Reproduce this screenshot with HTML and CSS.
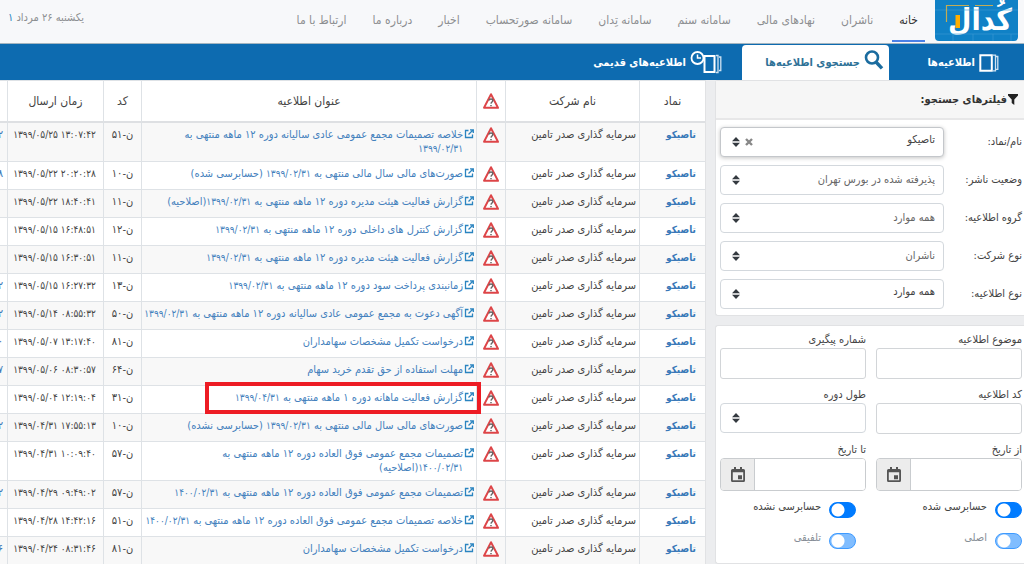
FILE: index.html
```html
<!DOCTYPE html>
<html lang="fa" dir="rtl">
<head>
<meta charset="utf-8">
<meta name="viewport" content="width=device-width, initial-scale=1">
<title>کدال - جستجوی اطلاعیه‌ها</title>
<link rel="stylesheet" href="styles.css">
</head>
<body>
<svg class="defs" aria-hidden="true">
  <symbol id="warn" viewBox="0 0 16 16"><path d="M8 1.200 15 14.800H1Z" fill="#fff" stroke="#dd4548" stroke-width="1.900" stroke-linejoin="round"/><path d="M6.200 7.600c0-2.200 3.600-2.200 3.600 0 0 1.400-1.600 1.400-1.800 3M8 12v1.300" fill="none" stroke="#666" stroke-width="1.500"/></symbol>
  <symbol id="ext" viewBox="0 0 10 10"><path d="M4.500 1.500H1.500v7h7V5.500M6 .8h3.300V4M9 1 4.500 5.500" fill="none" stroke="#2a84c0" stroke-width="1.300"/></symbol>
  <symbol id="book" viewBox="0 0 20 18"><path d="M1.300 1.300h11.500v15.400H1.300Z" fill="none" stroke="#fff" stroke-width="2"/><path d="M14 1.200h2.500v15.600H14M17 2.500h1.800v12.800H17" fill="none" stroke="#cfe2f1" stroke-width="1.300"/></symbol>
  <symbol id="sort" viewBox="0 0 8 10"><path d="M4 0 8 4.300H0ZM4 10 0 5.700h8Z" fill="#343a40"/></symbol>
  <symbol id="cal" viewBox="0 0 14 15"><path d="M3 0h2v2h4V0h2v2h1.500Q14 2 14 3.500v10Q14 15 12.500 15h-11Q0 15 0 13.500v-10Q0 2 1.500 2H3ZM1.800 5.300v7.900h10.400V5.300ZM7 8.200h4v4H7Z" fill="#555" fill-rule="evenodd"/></symbol>
</svg>
<header class="top">
  <a class="logo" href="#" aria-label="کدال">
    <span class="logo-text">کُدال</span>
    <svg class="logo-frame" viewBox="0 0 83 43" aria-hidden="true">
      <path d="M0 10H83M0 34H83M18 34V43M38 34V43M58 34V43M76 34V43" stroke="#3c9ad3" stroke-width=".6"/>
      <path d="M11.500 22V5.500H34M40 5.500H58" fill="none" stroke="#c2ac55" stroke-width="1.200"/>
      <path d="M20.500 15h4.500v13h-4.500Z" fill="#ffae00"/>
    </svg>
  </a>
  <nav class="nav">
    <a class="on" href="#">خانه</a><a href="#">ناشران</a><a href="#">نهادهای مالی</a><a href="#">سامانه سنم</a><a href="#">سامانه تِدان</a><a href="#">سامانه صورتحساب</a><a href="#">اخبار</a><a href="#">درباره ما</a><a href="#">ارتباط با ما</a>
  </nav>
  <div class="today">یکشنبه ۲۶ مرداد <span>۱</span></div>
</header>
<nav class="tabs">
  <a class="tab first" href="#"><svg class="book"><use href="#book"/></svg>اطلاعیه‌ها</a>
  <a class="tab active" href="#"><svg class="mag" viewBox="0 0 20 20"><circle cx="8" cy="7.500" r="6" fill="none" stroke="#1b6c9f" stroke-width="2.600"/><path d="m12 12 6 6.300" stroke="#1b6c9f" stroke-width="3.400"/></svg>جستجوی اطلاعیه‌ها</a>
  <a class="tab old" href="#"><svg class="clockbook" viewBox="0 0 32 24"><circle cx="7.500" cy="8" r="6" fill="none" stroke="#fff" stroke-width="1.800"/><path d="M7.500 4.500V8h3.500" fill="none" stroke="#fff" stroke-width="1.500"/><path d="M14.500 6h10v16h-10Z" fill="#0d6bb0" stroke="#fff" stroke-width="2"/><path d="M26 5.500h2v17h-2M29 7h1.800v13.500H29" fill="none" stroke="#cfe2f1" stroke-width="1.300"/></svg>اطلاعیه‌های قدیمی</a>
</nav>
<div class="page">
  <aside class="side">
    <section class="card">
      <h2 class="card-head"><svg viewBox="0 0 10 11"><path d="M0 0h10v1.500L6.300 5.500V11L3.700 9V5.500L0 1.500Z" fill="#222"/></svg>فیلترهای جستجو:</h2>
      <div class="filters">
        <label for="f1">نام/نماد:</label><div class="pick focus raised"><select id="f1"><option>تاصیکو</option></select><button class="clear" type="button" aria-label="حذف"><svg viewBox="0 0 8 8"><path d="m1 1 6 6M7 1 1 7" stroke="#888" stroke-width="2.400"/></svg></button><svg class="sort"><use href="#sort"/></svg></div>
        <label for="f2">وضعیت ناشر:</label><div class="pick"><select id="f2"><option>پذیرفته شده در بورس تهران</option></select><svg class="sort"><use href="#sort"/></svg></div>
        <label for="f3">گروه اطلاعیه:</label><div class="pick"><select id="f3"><option>همه موارد</option></select><svg class="sort"><use href="#sort"/></svg></div>
        <label for="f4">نوع شرکت:</label><div class="pick"><select id="f4"><option>ناشران</option></select><svg class="sort"><use href="#sort"/></svg></div>
        <label for="f5">نوع اطلاعیه:</label><div class="pick raised"><select id="f5"><option>همه موارد</option></select><svg class="sort"><use href="#sort"/></svg></div>
      </div>
    </section>
    <section class="card more">
      <div class="grid">
        <div class="field"><label for="g1">موضوع اطلاعیه</label><input id="g1" type="text"></div>
        <div class="field"><label for="g2">شماره پیگیری</label><input id="g2" type="text"></div>
        <div class="field"><label for="g3">کد اطلاعیه</label><input id="g3" type="text"></div>
        <div class="field"><label for="g4">طول دوره</label><div class="pick"><select id="g4"><option></option></select><svg class="sort"><use href="#sort"/></svg></div></div>
        <div class="field"><label for="g5">از تاریخ</label><div class="date"><input id="g5" type="text"><button type="button" aria-label="تقویم"><svg><use href="#cal"/></svg></button></div></div>
        <div class="field"><label for="g6">تا تاریخ</label><div class="date"><input id="g6" type="text"><button type="button" aria-label="تقویم"><svg><use href="#cal"/></svg></button></div></div>
      </div>
      <div class="switches">
        <label><input type="checkbox" checked>حسابرسی شده</label><label><input type="checkbox" checked>حسابرسی نشده</label>
        <label><input type="checkbox" checked disabled>اصلی</label><label><input type="checkbox" checked disabled>تلفیقی</label>
      </div>
    </section>
  </aside>
  <main class="main">
    <table class="list">
      <colgroup><col class="c-sym"><col class="c-co"><col class="c-warn"><col><col class="c-code"><col class="c-time"><col class="c-pub"></colgroup>
      <thead><tr><th>نماد</th><th>نام شرکت</th><th><svg class="warn"><use href="#warn"/></svg></th><th>عنوان اطلاعیه</th><th>کد</th><th>زمان ارسال</th><th></th></tr></thead>
      <tbody>
      <tr><td class="sym"><a href="#">تاصیکو</a></td><td>سرمایه گذاری صدر تامین</td><td class="w"><svg class="warn"><use href="#warn"/></svg></td><td class="title"><a href="#"><svg><use href="#ext"/></svg><span>خلاصه تصمیمات مجمع عمومی عادی سالیانه دوره ۱۲ ماهه منتهی به<br><small>۱۳۹۹/۰۲/۳۱</small></span></a></td><td class="code">ن-۵۱</td><td class="time">۱۳۹۹/۰۵/۲۵ ۱۳:۰۷:۴۲</td><td class="pub">۲</td></tr>
      <tr><td class="sym"><a href="#">تاصیکو</a></td><td>سرمایه گذاری صدر تامین</td><td class="w"><svg class="warn"><use href="#warn"/></svg></td><td class="title"><a href="#"><svg><use href="#ext"/></svg><span>صورت‌های مالی سال مالی منتهی به <small>۱۳۹۹/۰۲/۳۱</small> (حسابرسی شده)</span></a></td><td class="code">ن-۱۰</td><td class="time">۱۳۹۹/۰۵/۲۲ ۲۰:۲۰:۲۸</td><td class="pub">۸</td></tr>
      <tr><td class="sym"><a href="#">تاصیکو</a></td><td>سرمایه گذاری صدر تامین</td><td class="w"><svg class="warn"><use href="#warn"/></svg></td><td class="title"><a href="#"><svg><use href="#ext"/></svg><span>گزارش فعالیت هیئت مدیره دوره ۱۲ ماهه منتهی به <small>۱۳۹۹/۰۲/۳۱</small>(اصلاحیه)</span></a></td><td class="code">ن-۱۱</td><td class="time">۱۳۹۹/۰۵/۲۲ ۱۸:۴۰:۴۱</td><td></td></tr>
      <tr><td class="sym"><a href="#">تاصیکو</a></td><td>سرمایه گذاری صدر تامین</td><td class="w"><svg class="warn"><use href="#warn"/></svg></td><td class="title"><a href="#"><svg><use href="#ext"/></svg><span>گزارش کنترل های داخلی دوره ۱۲ ماهه منتهی به <small>۱۳۹۹/۰۲/۳۱</small></span></a></td><td class="code">ن-۱۲</td><td class="time">۱۳۹۹/۰۵/۱۵ ۱۶:۴۸:۵۱</td><td></td></tr>
      <tr><td class="sym"><a href="#">تاصیکو</a></td><td>سرمایه گذاری صدر تامین</td><td class="w"><svg class="warn"><use href="#warn"/></svg></td><td class="title"><a href="#"><svg><use href="#ext"/></svg><span>گزارش فعالیت هیئت مدیره دوره ۱۲ ماهه منتهی به <small>۱۳۹۹/۰۲/۳۱</small></span></a></td><td class="code">ن-۱۱</td><td class="time">۱۳۹۹/۰۵/۱۵ ۱۶:۳۰:۵۱</td><td></td></tr>
      <tr><td class="sym"><a href="#">تاصیکو</a></td><td>سرمایه گذاری صدر تامین</td><td class="w"><svg class="warn"><use href="#warn"/></svg></td><td class="title"><a href="#"><svg><use href="#ext"/></svg><span>زمانبندی پرداخت سود دوره ۱۲ ماهه منتهی به <small>۱۳۹۹/۰۲/۳۱</small></span></a></td><td class="code">ن-۱۳</td><td class="time">۱۳۹۹/۰۵/۱۵ ۱۶:۲۷:۳۲</td><td class="pub">۲</td></tr>
      <tr><td class="sym"><a href="#">تاصیکو</a></td><td>سرمایه گذاری صدر تامین</td><td class="w"><svg class="warn"><use href="#warn"/></svg></td><td class="title"><a href="#"><svg><use href="#ext"/></svg><span>آگهی دعوت به مجمع عمومی عادی سالیانه دوره ۱۲ ماهه منتهی به <small>۱۳۹۹/۰۲/۳۱</small></span></a></td><td class="code">ن-۵۰</td><td class="time">۱۳۹۹/۰۵/۱۴ ۰۸:۵۵:۳۲</td><td class="pub">۲</td></tr>
      <tr><td class="sym"><a href="#">تاصیکو</a></td><td>سرمایه گذاری صدر تامین</td><td class="w"><svg class="warn"><use href="#warn"/></svg></td><td class="title"><a href="#"><svg><use href="#ext"/></svg><span>درخواست تکمیل مشخصات سهامداران</span></a></td><td class="code">ن-۸۱</td><td class="time">۱۳۹۹/۰۵/۰۷ ۱۳:۱۷:۴۰</td><td class="pub">۰</td></tr>
      <tr><td class="sym"><a href="#">تاصیکو</a></td><td>سرمایه گذاری صدر تامین</td><td class="w"><svg class="warn"><use href="#warn"/></svg></td><td class="title"><a href="#"><svg><use href="#ext"/></svg><span>مهلت استفاده از حق تقدم خرید سهام</span></a></td><td class="code">ن-۶۴</td><td class="time">۱۳۹۹/۰۵/۰۶ ۰۸:۳۰:۵۷</td><td class="pub">۷</td></tr>
      <tr><td class="sym"><a href="#">تاصیکو</a></td><td>سرمایه گذاری صدر تامین</td><td class="w"><svg class="warn"><use href="#warn"/></svg></td><td class="title marked"><a href="#"><svg><use href="#ext"/></svg><span>گزارش فعالیت ماهانه دوره ۱ ماهه منتهی به <small>۱۳۹۹/۰۴/۳۱</small></span></a></td><td class="code">ن-۳۱</td><td class="time">۱۳۹۹/۰۵/۰۴ ۱۲:۱۹:۰۴</td><td></td></tr>
      <tr><td class="sym"><a href="#">تاصیکو</a></td><td>سرمایه گذاری صدر تامین</td><td class="w"><svg class="warn"><use href="#warn"/></svg></td><td class="title"><a href="#"><svg><use href="#ext"/></svg><span>صورت‌های مالی سال مالی منتهی به <small>۱۳۹۹/۰۲/۳۱</small> (حسابرسی نشده)</span></a></td><td class="code">ن-۱۰</td><td class="time">۱۳۹۹/۰۴/۳۱ ۱۷:۵۵:۱۳</td><td class="pub">۲</td></tr>
      <tr><td class="sym"><a href="#">تاصیکو</a></td><td>سرمایه گذاری صدر تامین</td><td class="w"><svg class="warn"><use href="#warn"/></svg></td><td class="title"><a href="#"><svg><use href="#ext"/></svg><span>تصمیمات مجمع عمومی فوق العاده دوره ۱۲ ماهه منتهی به<br><small>۱۴۰۰/۰۲/۳۱</small>(اصلاحیه)</span></a></td><td class="code">ن-۵۷</td><td class="time">۱۳۹۹/۰۴/۳۱ ۱۰:۰۹:۴۰</td><td></td></tr>
      <tr><td class="sym"><a href="#">تاصیکو</a></td><td>سرمایه گذاری صدر تامین</td><td class="w"><svg class="warn"><use href="#warn"/></svg></td><td class="title"><a href="#"><svg><use href="#ext"/></svg><span>تصمیمات مجمع عمومی فوق العاده دوره ۱۲ ماهه منتهی به <small>۱۴۰۰/۰۲/۳۱</small></span></a></td><td class="code">ن-۵۷</td><td class="time">۱۳۹۹/۰۴/۲۹ ۰۹:۴۹:۰۲</td><td class="pub">۲</td></tr>
      <tr><td class="sym"><a href="#">تاصیکو</a></td><td>سرمایه گذاری صدر تامین</td><td class="w"><svg class="warn"><use href="#warn"/></svg></td><td class="title"><a href="#"><svg><use href="#ext"/></svg><span>خلاصه تصمیمات مجمع عمومی فوق العاده دوره ۱۲ ماهه منتهی به <small>۱۴۰۰/۰۲/۳۱</small></span></a></td><td class="code">ن-۵۱</td><td class="time">۱۳۹۹/۰۴/۲۸ ۱۴:۴۲:۱۶</td><td></td></tr>
      <tr><td class="sym"><a href="#">تاصیکو</a></td><td>سرمایه گذاری صدر تامین</td><td class="w"><svg class="warn"><use href="#warn"/></svg></td><td class="title"><a href="#"><svg><use href="#ext"/></svg><span>درخواست تکمیل مشخصات سهامداران</span></a></td><td class="code">ن-۸۱</td><td class="time">۱۳۹۹/۰۴/۲۴ ۰۸:۳۱:۴۶</td><td class="pub">۶</td></tr>
      </tbody>
    </table>
  </main>
</div>
</body>
</html>
```
FILE: styles.css
```css
* { box-sizing: border-box; }
body {
  margin: 0;
  height: 100vh;
  display: flex;
  flex-direction: column;
  overflow: hidden;
  background: #ecedef;
  color: #444;
  font: 11px/14px "DejaVu Sans Condensed", "DejaVu Sans", sans-serif;
}
a { text-decoration: none; color: inherit; }
svg { display: block; flex: none; }
input, select, button { font: inherit; color: inherit; margin: 0; min-width: 0; }
.defs { position: absolute; width: 0; height: 0; }

.top {
  display: flex;
  flex: none;
  height: 44px;
  padding-right: 6px;
  background: #f7f8fa;
  border-bottom: 1px solid #a3b5c0;
  white-space: nowrap;
}
.logo {
  position: relative;
  width: 83px;
  height: 41px;
  background: #1081c6;
  border-radius: 0 0 4px 4px;
  overflow: hidden;
}
.logo-frame { position: absolute; inset: 0; width: 83px; height: 43px; }
.logo-text {
  position: absolute;
  inset: 0 6px auto auto;
  color: #fff;
  font: bold 30px/40px "DejaVu Sans Condensed", "DejaVu Sans", sans-serif;
}
.nav { display: flex; padding-right: 10px; gap: 12px; font-size: 12px; color: #8d8f91; }
.nav a { display: flex; align-items: center; height: 42px; padding: 0 7px 2px; }
.nav .on { color: #333; border-bottom: 2px solid #4a80e6; padding-bottom: 0; }
.today { margin-right: auto; width: 84px; overflow: hidden; line-height: 36px; color: #8d8f91; }
.today span { color: #2a84c0; }

.tabs { display: flex; flex: none; height: 36px; background: #0d6bb0; color: #fff; font-weight: bold; padding: 1px 0 0; }
.tab { display: flex; align-items: center; gap: 4px; white-space: nowrap; }
.first { width: 135px; padding-right: 25px; }
.active { width: 147px; padding-right: 5px; background: #fff; color: #2f7297; border-radius: 4px 4px 0 0; }
.old { padding-right: 20px; }
.book { width: 20px; height: 18px; }
.mag { width: 20px; height: 20px; margin-bottom: 5px; }
.clockbook { width: 32px; height: 24px; margin-bottom: 2px; direction: ltr; }

.page { display: flex; flex: 1; min-height: 0; }
.side { flex: none; width: 309px; display: flex; flex-direction: column; gap: 9px; }
.card { background: #fff; border: 1px solid #e1e2e4; border-right: 0; border-radius: 3px 0 0 3px; }
.card-head {
  display: flex;
  align-items: center;
  gap: 1px;
  height: 39px;
  margin: 0;
  padding-right: 6px;
  background: #f6f6f6;
  border-bottom: 2px solid #e7e7e8;
  font-size: 11px;
  color: #333;
}
.card-head svg { width: 10px; height: 11px; }
.filters {
  display: grid;
  grid-template-columns: 1fr 224px;
  gap: 8px 0;
  padding: 7px 2px 6px 4px;
  align-items: center;
}
.pick { position: relative; height: 30px; }
.pick select {
  appearance: none;
  width: 100%;
  height: 100%;
  padding: 0 8px 0 24px;
  background: #fff;
  border: 1px solid #d3d8dd;
  border-radius: 4px;
  color: #666;
}
.focus select { border-color: #c4c7cb; box-shadow: 0 1px 4px #c3c3c3; }
.raised select { padding-bottom: 5px; color: #444; }
.sort { position: absolute; left: 12px; top: 10px; width: 8px; height: 10px; }
.clear { position: absolute; left: 25px; top: 11px; padding: 0; border: 0; background: none; }
.clear svg { width: 8px; height: 8px; }

.more { flex: 1; padding: 7px 2px 0 4px; }
.grid { display: grid; grid-template-columns: 1fr 1fr; gap: 9px 10px; }
.field label { display: block; line-height: 14px; margin-bottom: 1px; }
.field > input, .date input { display: block; width: 100%; height: 31px; background: #fff; border: 1px solid #d2d5d8; border-radius: 3px; }
.date { display: flex; height: 33px; border: 1px solid #c9cccf; border-radius: 4px; overflow: hidden; }
.date input { flex: 1; border: 0; border-radius: 0; }
.date button { display: grid; place-items: center; width: 34px; padding: 0; background: #ececec; border: 0; border-right: 1px solid #c9cccf; }
.date svg { width: 14px; height: 15px; }
.switches { display: grid; grid-template-columns: 166px 1fr; gap: 15px 0; padding-top: 11px; }
.switches label { display: flex; gap: 8px; line-height: 9px; height: 16px; }
.switches input {
  appearance: none;
  flex: none;
  width: 27px;
  height: 16px;
  border-radius: 8px;
  border: 1px solid #007bff;
  background: radial-gradient(circle at 8px 7px, #fff 6px, #007bff 7px);
}
.switches input:disabled { background: radial-gradient(circle at 8px 7px, #fff 6px, #80bdff 7px); border-color: #3d9aff; }
.switches label:has(:disabled) { color: #868e96; }

.main { flex: 1; min-width: 0; margin-right: 9px; border-right: 1px solid #e1e2e4; overflow: hidden; }
.list { width: 100%; table-layout: fixed; border-collapse: separate; border-spacing: 0; background: #fff; border-top: 1px solid #dee2e6; }
.c-sym { width: 66px; }
.c-co { width: 134px; }
.c-warn { width: 29px; }
.c-code { width: 38px; }
.c-time { width: 96px; }
.c-pub { width: 7px; }
.list th { height: 42px; padding: 0; font-size: 12px; font-weight: normal; border-bottom: 2px solid #dee0e3; border-left: 1px solid #dee2e6; }
.list td { height: 28px; padding: 5px 3px; vertical-align: top; border-bottom: 1px solid #dee2e6; border-left: 1px solid #dee2e6; white-space: nowrap; }
.list tbody tr:nth-child(odd) { background: #f8f8f8; }
.list tr > :last-child { border-left: 0; }
.warn { width: 16px; height: 16px; margin: 0 auto; }
.list .sym { padding-right: 9px; color: #3a78b8; font-weight: bold; font-size: 10px; }
.list .w { padding: 4px 0 0; }
.list .title { position: relative; padding: 5px 2px 5px 0; color: #4481bd; }
.title a { display: flex; gap: 1px; }
.title small { font-size: 10px; }
.title svg { width: 10px; height: 10px; margin-top: 1px; }
.list .code { text-align: center; }
.list .time { direction: ltr; text-align: center; font-size: 10px; padding: 5px 0; }
.list .pub { padding: 5px 4px 5px 0; overflow: hidden; color: #3a78b8; }
.marked::after { content: ""; position: absolute; z-index: 1; box-sizing: border-box; top: -4px; right: -5px; width: 276px; height: 32px; border: 4px solid #ed1c24; }
```
